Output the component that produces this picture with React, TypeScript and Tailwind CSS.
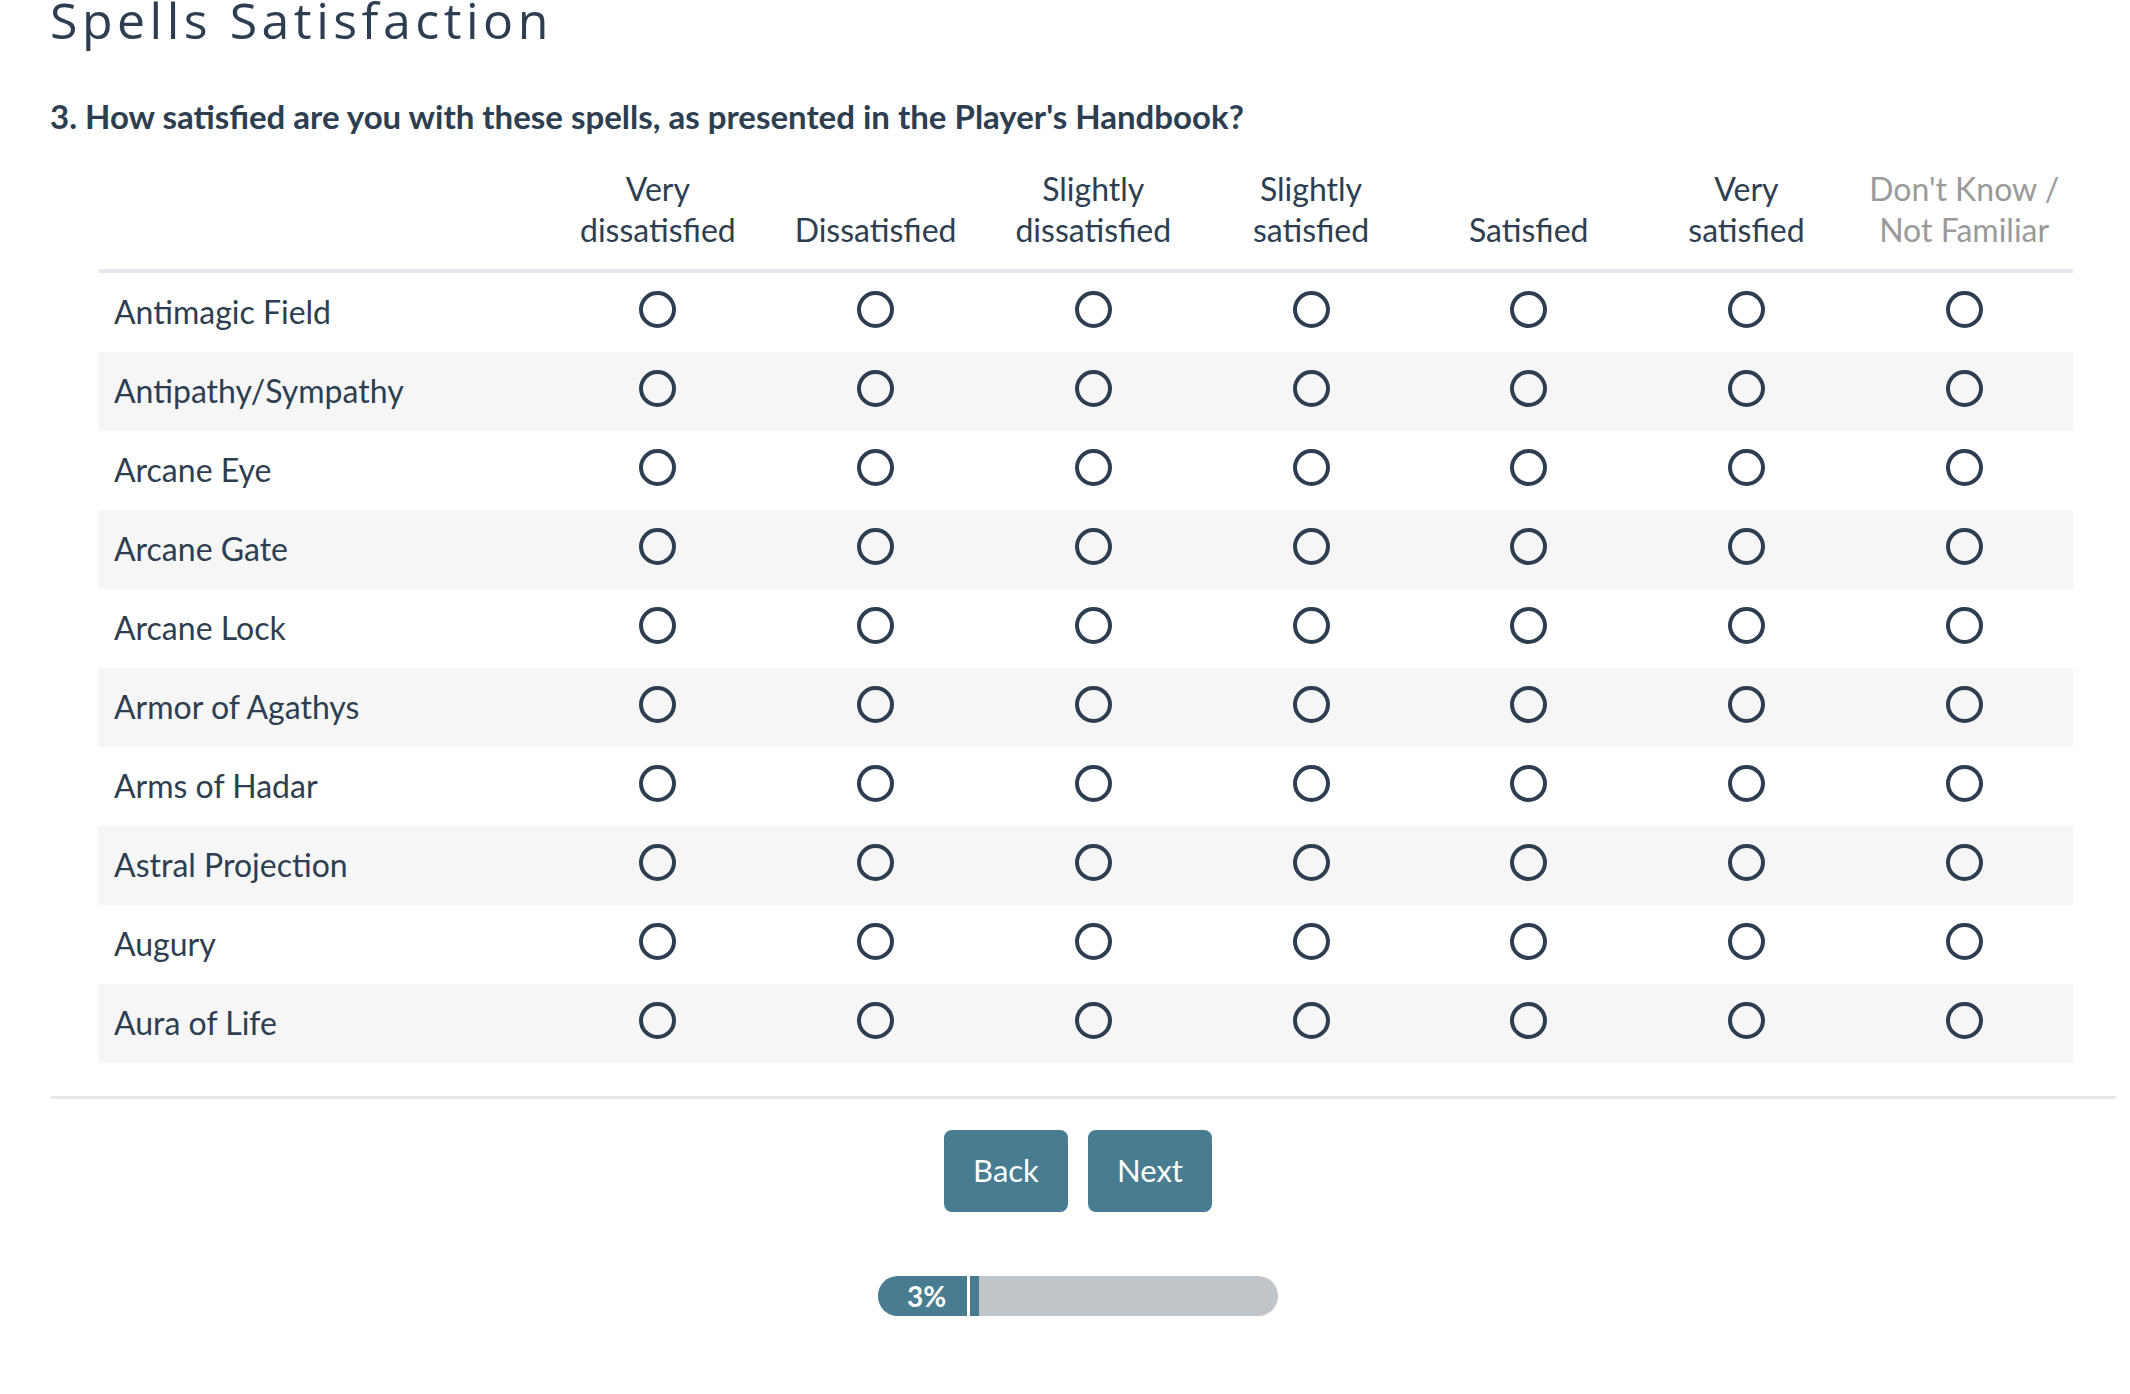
import React from 'react';

const columns: { lines: string[]; muted?: boolean }[] = [
  { lines: ['Very', 'dissatisfied'] },
  { lines: ['Dissatisfied'] },
  { lines: ['Slightly', 'dissatisfied'] },
  { lines: ['Slightly', 'satisfied'] },
  { lines: ['Satisfied'] },
  { lines: ['Very', 'satisfied'] },
  { lines: ["Don't Know /", 'Not Familiar'], muted: true },
];

const spells = [
  'Antimagic Field',
  'Antipathy/Sympathy',
  'Arcane Eye',
  'Arcane Gate',
  'Arcane Lock',
  'Armor of Agathys',
  'Arms of Hadar',
  'Astral Projection',
  'Augury',
  'Aura of Life',
];

function Radio() {
  return <div className="w-[37px] h-[37px] rounded-full border-4 border-[#2d3e50] mb-[6px]" />;
}

export default function App() {
  return (
    <div className="min-h-[1394px] bg-white text-[#2d3e50] font-['Lato','Liberation_Sans',sans-serif] overflow-hidden">
      <div className="ml-[50px] w-[2066px]">
        <h1 className="mt-[-5px] text-[50px] leading-none font-normal tracking-[4.5px] font-['Open_Sans','Liberation_Sans',sans-serif] text-[#2d3e50]">
          Spells Satisfaction
        </h1>

        <h2 className="mt-[52px] text-[33px] leading-[1.2] font-bold">
          3. How satisfied are you with these spells, as presented in the Player's Handbook?
        </h2>

        <div className="ml-[48px] w-[1975px] mt-[31px]">
          <div className="flex items-end border-b-4 border-[#e6e8eb] pb-[19px]">
            <div className="w-[451px] shrink-0" />
            {columns.map((c, i) => (
              <div
                key={i}
                className={`flex-1 text-center text-[32px] leading-[41px] ${c.muted ? 'text-[#9a9a9a]' : ''}`}
              >
                {c.lines.map((l) => (
                  <div key={l}>{l}</div>
                ))}
              </div>
            ))}
          </div>

          {spells.map((s, r) => (
            <div key={s} className={`flex items-center h-[79px] ${r % 2 === 1 ? 'bg-[#f6f6f6]' : ''}`}>
              <div className="w-[451px] shrink-0 pl-[16px] text-[32px] leading-[1.2]">{s}</div>
              {columns.map((_, i) => (
                <div key={i} className="flex-1 flex justify-center items-center">
                  <Radio />
                </div>
              ))}
            </div>
          ))}
        </div>

        <div className="mt-[33px] h-[3px] bg-[#e8e8e8]" />

        <div className="w-[2056px] flex justify-center gap-[20px] mt-[31px]">
          <button className="w-[124px] h-[82px] rounded-[8px] bg-[#487c90] text-white text-[31px]">Back</button>
          <button className="w-[124px] h-[82px] rounded-[8px] bg-[#487c90] text-white text-[31px]">Next</button>
        </div>

        <div className="w-[2056px] flex justify-center mt-[64px]">
          <div className="w-[400px] h-[40px] rounded-full bg-[#c0c5c9] overflow-hidden flex">
            <div className="w-[89px] h-full bg-[#487c90] flex items-center justify-center pl-[8px] text-white font-bold text-[28px]">
              3%
            </div>
            <div className="w-[3px] h-full bg-white" />
            <div className="w-[9px] h-full bg-[#487c90]" />
          </div>
        </div>
      </div>
    </div>
  );
}
